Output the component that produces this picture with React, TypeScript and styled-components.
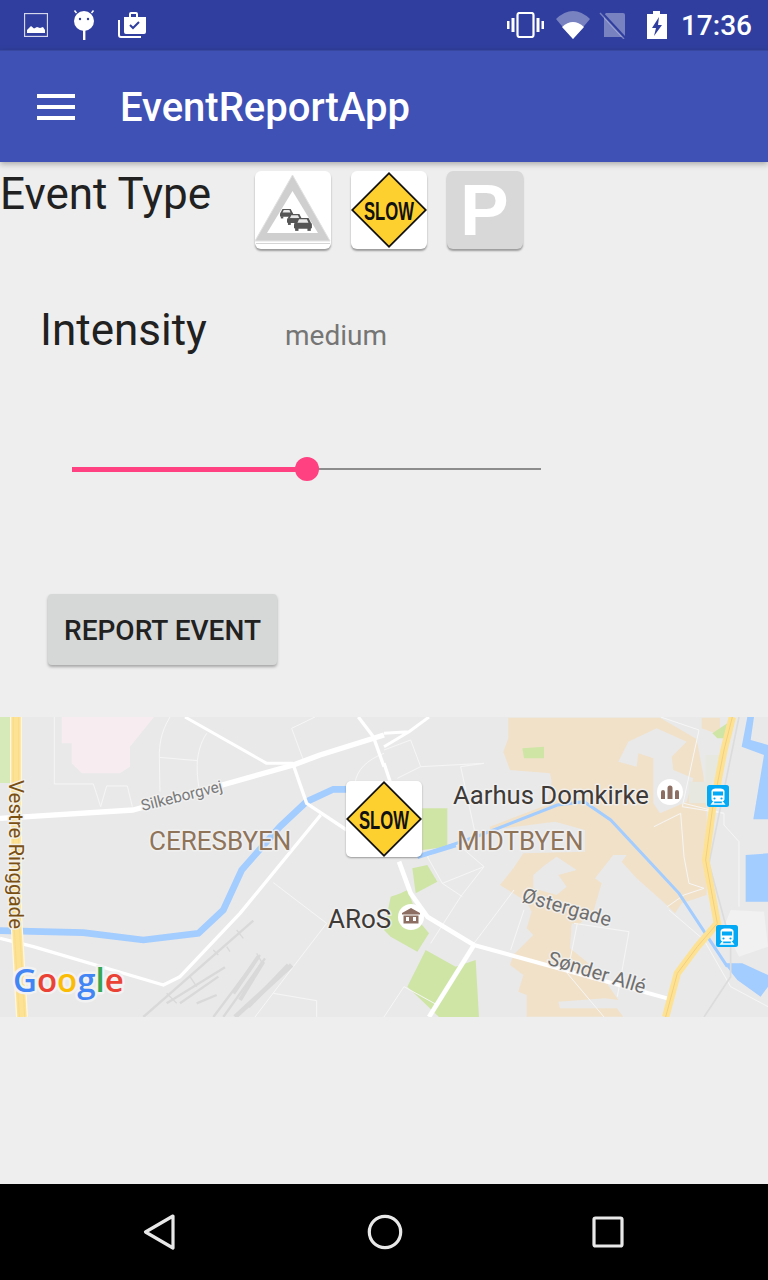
import React from "react";
import styled, { createGlobalStyle } from "styled-components";

const Global = createGlobalStyle`
  html, body { margin: 0; padding: 0; background: #eeeeee; }
  body { font-family: Roboto, "Liberation Sans", sans-serif; }
  * { box-sizing: border-box; }
`;

const Screen = styled.div`
  width: 768px;
  height: 1280px;
  display: flex;
  flex-direction: column;
  background: #eeeeee;
  overflow: hidden;
`;
const StatusBar = styled.div`
  height: 50px;
  flex: none;
  display: flex;
  align-items: center;
  background: #303f9f;
  padding: 0 16px 0 24px;
`;
const StatusGroup = styled.div<{ $gap: number }>`
  display: flex;
  align-items: center;
  gap: ${(p) => p.$gap}px;
`;
const Spacer = styled.div`
  flex: 1;
`;
const Clock = styled.span`
  font-size: 28px;
  font-weight: 500;
  color: #ffffff;
  margin-left: 14px;
`;
const WifiIcon = styled.svg`
  margin-left: 3px;
`;
const BatteryIcon = styled.svg`
  margin-left: 12px;
`;
const AppBar = styled.header`
  height: 112px;
  flex: none;
  position: relative;
  z-index: 2;
  display: flex;
  align-items: center;
  gap: 45px;
  padding: 0 0 0 37px;
  background: #3f51b5;
  border-top: 1px solid #38479f;
  box-shadow: 0 2px 6px rgba(0, 0, 0, 0.3);
`;
const MenuIcon = styled.div`
  width: 38px;
  height: 26px;
  display: flex;
  flex-direction: column;
  justify-content: space-between;
  span {
    display: block;
    height: 4px;
    background: #ffffff;
  }
`;
const Title = styled.h1`
  margin: 3px 0 0;
  font-size: 40px;
  line-height: 46px;
  font-weight: 500;
  color: #ffffff;
`;
const Content = styled.main`
  flex: 1;
  display: flex;
  flex-direction: column;
  min-height: 0;
`;
const TypeRow = styled.section`
  height: 87px;
  padding: 9px 0 0 0;
  display: flex;
  align-items: flex-start;
`;
const TypeLabel = styled.div`
  width: 255px;
  font-size: 44px;
  line-height: 47px;
  color: #212121;
`;
const TypeButtons = styled.div`
  display: flex;
  gap: 20px;
`;
const SignButton = styled.button<{ $bg: string }>`
  width: 76px;
  height: 78px;
  padding: 0;
  border: 0;
  border-radius: 6px;
  background: ${(p) => p.$bg};
  box-shadow: 0 2px 2px rgba(0, 0, 0, 0.35);
  svg {
    display: block;
    overflow: visible;
  }
`;
const IntensityRow = styled.section`
  height: 112px;
  padding: 49px 0 0 40px;
  display: flex;
  align-items: center;
`;
const IntensityLabel = styled.div`
  width: 245px;
  font-size: 44px;
  line-height: 50px;
  color: #212121;
`;
const IntensityValue = styled.div`
  margin-top: 12px;
  font-size: 28px;
  line-height: 34px;
  color: #757575;
`;
const SliderRow = styled.section`
  height: 120px;
  padding: 0 0 0 72px;
  display: flex;
  align-items: flex-end;
`;
const Slider = styled.div`
  width: 469px;
  height: 24px;
  position: relative;
  display: flex;
  align-items: center;
`;
const SliderActive = styled.div`
  height: 5px;
  background: #ff4081;
`;
const SliderRest = styled.div`
  flex: 1;
  height: 2px;
  background: #8c8c8c;
`;
const Thumb = styled.div`
  position: absolute;
  top: 0;
  width: 24px;
  height: 24px;
  border-radius: 50%;
  background: #ff4081;
`;
const ButtonRow = styled.section`
  padding: 113px 0 0 48px;
`;
const ReportButton = styled.button`
  width: 229px;
  height: 71px;
  padding: 2px 0 0;
  border: 0;
  border-radius: 4px;
  background: #d6d7d7;
  box-shadow: 0 2px 3px rgba(0, 0, 0, 0.3);
  font-family: Roboto, "Liberation Sans", sans-serif;
  font-size: 28px;
  font-weight: 500;
  color: #212121;
`;
const MapFrame = styled.section`
  width: 768px;
  height: 300px;
  margin-top: 52px;
  position: relative;
  overflow: hidden;
  background: #e9e9e9;
  svg {
    display: block;
  }
`;
const Marker = styled.div`
  position: absolute;
  left: 346px;
  top: 64px;
  width: 76px;
  height: 76px;
  border-radius: 5px;
  background: #ffffff;
  box-shadow: 0 1px 2px rgba(0, 0, 0, 0.35);
  svg {
    display: block;
  }
`;
const MapLabel = styled.text<{ $size: number; $color: string }>`
  font-family: Roboto, "Liberation Sans", sans-serif;
  font-size: ${(p) => p.$size}px;
  fill: ${(p) => p.$color};
  stroke: #f1f1f1;
  stroke-opacity: 0.85;
  stroke-width: 3px;
  paint-order: stroke;
  stroke-linejoin: round;
`;
const SignText = styled.text`
  font-family: "Liberation Sans", sans-serif;
  font-weight: 700;
  font-size: 25px;
  fill: #111111;
`;
const ParkText = styled.text`
  font-family: "Liberation Sans", sans-serif;
  font-weight: 700;
  font-size: 73px;
  fill: #ffffff;
`;
const LogoText = styled.text`
  font-family: "Open Sans", "Liberation Sans", sans-serif;
  font-size: 33px;
  font-weight: 600;
  stroke: #f2f2f2;
  stroke-width: 5px;
  paint-order: stroke;
  stroke-linejoin: round;
`;
const NavBar = styled.nav`
  height: 96px;
  flex: none;
  background: #000000;
  display: flex;
  align-items: center;
  justify-content: center;
  gap: 188px;
`;

const SlowSign = () => (
  <svg width="76" height="76" viewBox="0 0 76 76">
    <polygon points="38,0 76,38 38,76 0,38" fill="#111" />
    <polygon points="38,2.5 73.5,38 38,73.5 2.5,38" fill="#fdd02f" />
    <SignText transform="translate(13 47.500) scale(0.667 1)">SLOW</SignText>
  </svg>
);

const Car = ({ x, y, s }: { x: number; y: number; s: number }) => (
  <g transform={`translate(${x} ${y}) scale(${s})`} fill="#555">
    <path d="M3 0h10l2.500 5H.500z" />
    <rect x="0" y="4.500" width="16" height="5" rx="1.200" />
    <rect x="1" y="9" width="3" height="2.500" />
    <rect x="12" y="9" width="3" height="2.500" />
    <path d="M4.500 1.200h7l1.400 3H3.100z" fill="#e8e8e8" />
  </g>
);

const TrafficSign = () => (
  <svg width="76" height="78" viewBox="0 0 76 78">
    <polygon points="37.500,4 75,70 0,70" fill="#cfcfcf" stroke="#e2e2e2" strokeWidth="1" strokeLinejoin="round" />
    <polygon points="37.500,20 63,62 12,62" fill="#ffffff" />
    <rect x="1" y="72" width="74" height="1" fill="#d5d5d5" />
    <Car x={25} y={38} s={0.82} />
    <Car x={32} y={43} s={0.95} />
    <Car x={39} y={47} s={1.12} />
  </svg>
);

const ParkingSign = () => (
  <svg width="76" height="78" viewBox="0 0 76 78">
    <ParkText x="13" y="64">P</ParkText>
  </svg>
);

const StatusIconsLeft = () => (
  <StatusGroup $gap={23}>
    <svg width="24" height="24" viewBox="0 0 24 24">
      <rect x="0.500" y="0.500" width="23" height="23" fill="none" stroke="#d5d8ec" strokeWidth="1.300" />
      <path d="M3 20v-3l4-4 3 2.500 3-1.500 3 1 3-1 2 3v3z" fill="#fff" />
    </svg>
    <svg width="24" height="30" viewBox="0 0 24 30">
      <circle cx="13" cy="11" r="10" fill="#fff" />
      <path d="M5.500 3L3.500 .5M20.500 3l2-2.500" stroke="#fff" strokeWidth="1.500" />
      <circle cx="9" cy="9" r="1.200" fill="#303f9f" />
      <circle cx="17" cy="9" r="1.200" fill="#303f9f" />
      <rect x="12" y="20" width="2.400" height="10" fill="#fff" />
    </svg>
    <svg width="29" height="28" viewBox="0 0 29 28">
      <path d="M1 9v15a2 2 0 0 0 2 2h20" fill="none" stroke="#fff" strokeWidth="2" />
      <path d="M6 6h5V3a2 2 0 0 1 2-2h5a2 2 0 0 1 2 2v3h8v15a2 2 0 0 1-2 2H8a2 2 0 0 1-2-2z" fill="#fff" />
      <rect x="13" y="3" width="5" height="3" fill="#303f9f" />
      <path d="M12 14l3 3 6-6" fill="none" stroke="#303f9f" strokeWidth="2" />
    </svg>
  </StatusGroup>
);

const StatusIconsRight = () => (
  <StatusGroup $gap={8}>
    <svg width="37" height="26" viewBox="0 0 37 26">
      <rect x="10.500" y="1" width="16" height="24" rx="2" fill="none" stroke="#fff" strokeWidth="2.200" />
      <path d="M4.500 6h3v14h-3zM0 9h2.500v8H0zM29.500 6h3v14h-3zM34.500 9H37v8h-2.500z" fill="#fff" />
    </svg>
    <WifiIcon width="36" height="28" viewBox="0 0 36 28">
      <path d="M1 8Q18 -8 35 8L18 28z" fill="#fff" fillOpacity="0.35" />
      <path d="M7 16Q18 6 29 16L18 28z" fill="#fff" />
    </WifiIcon>
    <svg width="28" height="28" viewBox="0 0 28 28">
      <path d="M7 2h17a2 2 0 0 1 2 2v22H5V4z" fill="#fff" fillOpacity="0.35" />
      <path d="M2 1l24 26" stroke="#303f9f" strokeWidth="2.600" />
      <path d="M1 2l24 26" stroke="#fff" strokeOpacity="0.35" strokeWidth="1.400" />
    </svg>
    <BatteryIcon width="20" height="28" viewBox="0 0 20 28">
      <path d="M6 0h7v3h7v25H0V3h6z" fill="#fff" />
      <path d="M12 6L5 17h4l-2 8 8-11h-4z" fill="#303f9f" />
    </BatteryIcon>
  </StatusGroup>
);

const TrainIcon = ({ x, y }: { x: number; y: number }) => (
  <g transform={`translate(${x} ${y})`}>
    <rect width="22" height="22" rx="2.500" fill="#03a9f4" />
    <path d="M11 3.500c-4 0-6.500.5-6.500 3V14c0 1.400 1.100 2.500 2.500 2.500h8c1.400 0 2.500-1.100 2.500-2.500V6.500c0-2.500-2.500-3-6.500-3z" fill="#fff" />
    <rect x="6" y="6.500" width="10" height="4" fill="#03a9f4" />
    <circle cx="7.500" cy="13.500" r="1.100" fill="#03a9f4" />
    <circle cx="14.500" cy="13.500" r="1.100" fill="#03a9f4" />
    <path d="M7 16.500L5 19h12l-2-2.500" fill="none" stroke="#fff" strokeWidth="1.500" />
  </g>
);

const MapDrawing = () => (
  <svg width="768" height="300" viewBox="0 0 768 300">
    {/* left half, in 3x crop coordinates */}
    <g transform="translate(0 -7) scale(0.33333)">
      <rect x="0" y="21" width="30" height="198" fill="#d6e9b8" />
      <path d="M185 21H462L390 110V170L360 190H245L215 160V100H185z" fill="#f7edf0" />
      <g fill="none" stroke="#f6f6f6" strokeWidth="3">
        <path d="M163 21V222H280L302 290L320 228H382L397 290" />
        <path d="M510 21C480 70 478 110 478 142L592 152C590 190 595 230 600 245M478 142L480 245M620 70C600 100 595 130 592 152" />
        <path d="M875 55L945 21M875 55L910 150M1152 130C1100 150 1070 180 1065 220" />
        <path d="M820 518L980 640L880 770M820 850L950 872V921M765 921L880 770" />
      </g>
      <g fill="none" stroke="#d9d9d9" strokeWidth="7">
        <path d="M430 921L760 632M500 880L675 772M540 880L655 800M590 880L650 855M640 921L780 735M670 921L795 745" />
        <path d="M710 660L730 685M640 720L655 735M680 710L690 725M770 730L790 765M500 850L530 880M570 800L590 830" strokeWidth="4" />
        <path d="M700 850L775 740M720 870L790 755M745 890L865 765" strokeWidth="12" />
        <path d="M705 921L875 765" strokeWidth="14" />
      </g>
      <path d="M0 662L250 668L430 690L595 670L670 600L725 480L840 350L920 275L1000 238H1050" fill="none" stroke="#a3ccff" strokeWidth="20" />
      <g fill="none" stroke="#ffffff" strokeLinejoin="round">
        <path d="M0 325L400 300L880 165L960 135L1152 75" strokeWidth="16" />
        <path d="M555 21L800 160H880" strokeWidth="9" />
        <path d="M880 165L920 280L1040 360" strokeWidth="10" />
        <path d="M1075 21L1120 80L1152 170" strokeWidth="10" />
        <path d="M962 315L720 610L540 800L490 825L100 710L0 685" strokeWidth="10" />
      </g>
      <path d="M48 21L48 610L66 921" fill="none" stroke="#fff6dc" strokeWidth="36" />
      <path d="M48 21L48 610L66 921" fill="none" stroke="#fde293" strokeWidth="28" />
      <path d="M40 21L40 610L58 921M56 21L56 610L74 921" fill="none" stroke="#f6d98a" strokeWidth="2" />
    </g>
    {/* built-up area, in a finer crop's coordinates */}
    <g transform="translate(490 -2) scale(0.33333)">
      <path
        d="M55 8H510L620 72L640 180L650 285V540L575 565L555 595L530 570L440 490L395 440L410 420H370L315 490L335 505L310 590L265 630L245 625L240 700L290 740L340 790L385 855L345 850L205 860L210 880L380 880L400 905H110V840L85 830L100 780L60 750L70 720L100 690L130 660L110 640L125 590L110 560L30 510L70 460L100 415L285 410V345L195 320L0 345V335L170 270L185 200L180 175L60 165L40 110L55 70z"
        fill="#f1e1c9"
      />
      <path d="M635 8H690V60L635 40z" fill="#f1e1c9" />
      <path d="M385 140L415 80L500 40L590 80L545 125L550 165L610 190L590 260L510 295L490 265V130L445 115L440 155z" fill="#e9e9e9" />
      <path d="M130 480L165 450L200 425L260 465L205 480L230 515L200 540L130 520z" fill="#e9e9e9" />
    </g>
    {/* right half, in 3x crop coordinates */}
    <g transform="translate(384 -7) scale(0.33333)">
      <path d="M915 215H985V280H915zM965 135H1005V215H965z" fill="#e7e8e0" />
      <path d="M1040 600L1140 605L1152 710L1065 740L1020 650z" fill="#f1f1f1" />
      <path d="M415 115L480 110V145H420zM985 70L1030 40L1020 85L1000 85zM115 295H190V410L115 420zM85 475L130 465L160 515L95 550zM125 720L215 770L275 750L285 921H165L70 830z" fill="#cfe5a6" />
      <path d="M0 660L20 560L50 550L70 540L110 640L135 670L100 725L20 680z" fill="#cfe5a6" />
      <path d="M1090 21H1110L1100 90L1152 105V328H1108L1140 135L1073 110zM1085 435L1152 430V575H1085zM1020 760H1075L1152 795V830L1130 860L1060 810z" fill="#a3ccff" />
      <g fill="none" stroke="#f6f6f6" strokeWidth="3">
        <path d="M0 120L80 90L110 170M40 205L110 170L300 160M300 160L230 170L280 400M230 410L300 470L230 560L140 700M300 470L175 520L235 560M170 420L130 440L175 520" />
        <path d="M390 540L270 700M420 600L380 720M580 640L550 790L660 921M570 640L735 665L700 860M0 921L60 830L160 885" />
        <path d="M810 350L890 310M890 310L900 440L915 520L960 535M850 590L900 555L960 535M855 600L960 690L1040 830L1152 890" />
        <path d="M830 21L945 60L895 290L1020 310L1020 345L1065 395L1065 590M1020 310L900 280" />
      </g>
      <path d="M1065 21L975 460L1040 700V800L960 921" fill="none" stroke="#dcdcdc" strokeWidth="5" />
      <path d="M130 430L290 375L520 285L600 275L680 330L885 550L1030 770" fill="none" stroke="#a3ccff" strokeWidth="9" />
      <path d="M100 440L215 405" fill="none" stroke="#a3ccff" strokeWidth="14" />
      <g fill="none" stroke="#ffffff" strokeLinejoin="round">
        <path d="M0 70L75 65L135 21M75 65L0 110" strokeWidth="9" />
        <path d="M0 160L30 250" strokeWidth="10" />
        <path d="M45 455L80 550L130 620L270 705" strokeWidth="14" />
        <path d="M270 705L850 865" strokeWidth="12" />
        <path d="M270 705L135 921" strokeWidth="14" />
      </g>
      <path d="M1045 21L1020 120L985 300L965 450L1000 640L940 710L880 790L845 921" fill="none" stroke="#fde293" strokeWidth="22" />
      <path d="M1045 21L1020 120L985 300L965 450L1000 640L940 710L880 790L845 921" fill="none" stroke="#f4cf7c" strokeWidth="3" />
    </g>

    <MapLabel $size={15.500} $color="#7a7a7a" textAnchor="middle" transform="translate(183 84) rotate(-14)">Silkeborgvej</MapLabel>
    <MapLabel $size={20.500} $color="#7a4f12" transform="translate(9 63) rotate(90)">Vestre Ringgade</MapLabel>
    <MapLabel $size={26} $color="#8f745a" x="149" y="133">CERESBYEN</MapLabel>
    <MapLabel $size={26} $color="#8f745a" x="457" y="133">MIDTBYEN</MapLabel>
    <MapLabel $size={25.700} $color="#3e3a37" x="453" y="87">Aarhus Domkirke</MapLabel>
    <MapLabel $size={26} $color="#3e3a37" x="328" y="211">ARoS</MapLabel>
    <MapLabel $size={20} $color="#6f6f6f" textAnchor="middle" transform="translate(565 197) rotate(16)">Østergade</MapLabel>
    <MapLabel $size={20} $color="#6f6f6f" textAnchor="middle" transform="translate(595 262) rotate(17)">Sønder Allé</MapLabel>

    <circle cx="670" cy="75" r="13" fill="#fff" />
    <path d="M661 82v-7a2 2 0 0 1 4 0v7zM667.500 82V71a2.500 2.500 0 0 1 5 0v11zM675 82v-7a2 2 0 0 1 4 0v7z" fill="#8d6e63" />
    <circle cx="411" cy="200" r="13" fill="#fff" />
    <path d="M402 196l9-5 9 5v1.500h-18zM403.500 198.500h15v8h-15z" fill="#8d6e63" />
    <rect x="406" y="200" width="3" height="4" fill="#fff" />
    <rect x="413" y="200" width="3" height="4" fill="#fff" />
    <TrainIcon x={707} y={68} />
    <TrainIcon x={716} y={208} />

    <LogoText x="13" y="275">
      <tspan fill="#4285f4">G</tspan>
      <tspan fill="#ea4335">o</tspan>
      <tspan fill="#fbbc05">o</tspan>
      <tspan fill="#4285f4">g</tspan>
      <tspan fill="#34a853">l</tspan>
      <tspan fill="#ea4335">e</tspan>
    </LogoText>
  </svg>
);

export default function App() {
  const level = 235;
  return (
    <Screen>
      <Global />
      <StatusBar>
        <StatusIconsLeft />
        <Spacer />
        <StatusIconsRight />
        <Clock>17:36</Clock>
      </StatusBar>
      <AppBar>
        <MenuIcon>
          <span />
          <span />
          <span />
        </MenuIcon>
        <Title>EventReportApp</Title>
      </AppBar>
      <Content>
        <TypeRow>
          <TypeLabel>Event Type</TypeLabel>
          <TypeButtons>
            <SignButton $bg="#ffffff"><TrafficSign /></SignButton>
            <SignButton $bg="#ffffff"><SlowSign /></SignButton>
            <SignButton $bg="#d8d8d8"><ParkingSign /></SignButton>
          </TypeButtons>
        </TypeRow>
        <IntensityRow>
          <IntensityLabel>Intensity</IntensityLabel>
          <IntensityValue>medium</IntensityValue>
        </IntensityRow>
        <SliderRow>
          <Slider>
            <SliderActive style={{ width: level }} />
            <SliderRest />
            <Thumb style={{ left: level - 12 }} />
          </Slider>
        </SliderRow>
        <ButtonRow>
          <ReportButton>REPORT EVENT</ReportButton>
        </ButtonRow>
        <MapFrame>
          <MapDrawing />
          <Marker><SlowSign /></Marker>
        </MapFrame>
      </Content>
      <NavBar>
        <svg width="36" height="38" viewBox="0 0 36 38">
          <path d="M30 3L2.500 19L30 35z" fill="none" stroke="#e8e8e8" strokeWidth="3.200" strokeLinejoin="round" />
        </svg>
        <svg width="36" height="36" viewBox="0 0 36 36">
          <circle cx="18" cy="18" r="15.700" fill="none" stroke="#e8e8e8" strokeWidth="3.200" />
        </svg>
        <svg width="34" height="34" viewBox="0 0 34 34">
          <rect x="3" y="3" width="28" height="28" rx="1.500" fill="none" stroke="#e8e8e8" strokeWidth="3.200" />
        </svg>
      </NavBar>
    </Screen>
  );
}
